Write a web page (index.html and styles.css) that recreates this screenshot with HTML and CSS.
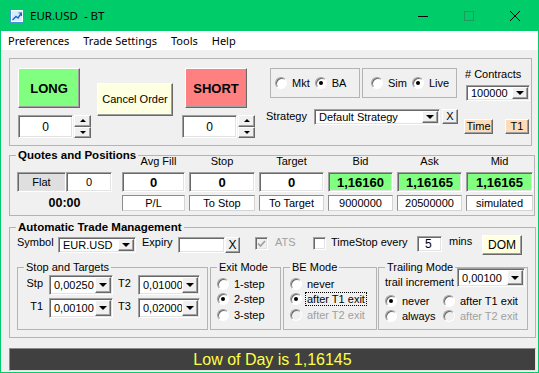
FILE: index.html
```html
<!DOCTYPE html>
<html>
<head>
<meta charset="UTF-8">
<title>EUR.USD - BT</title>
<link rel="stylesheet" href="styles.css">
</head>
<body>
<div id="janela">
    <div class="titulo">
        <svg class="icone" width="14" height="14" viewBox="0 0 14 14">
            <rect x="0.5" y="0.5" width="13" height="13" fill="#ffffff" stroke="#4a90d9"/>
            <rect x="2" y="2" width="10" height="10" fill="#d6ebfb"/>
            <polyline points="2.5,11 6,7.5 8,9 11.5,4" fill="none" stroke="#1d63c2" stroke-width="1.4"/>
            <polyline points="8.5,4 11.5,4 11.5,7" fill="none" stroke="#1d63c2" stroke-width="1.2"/>
        </svg>
        <span class="nome">EUR.USD&nbsp; - BT</span>
        <div class="controles">
            <span><svg width="10" height="10"><line x1="0" y1="5.5" x2="10" y2="5.5" stroke="#000"/></svg></span>
            <span><svg width="10" height="10"><rect x="0.5" y="0.5" width="9" height="9" fill="none" stroke="#1f9a5c"/></svg></span>
            <span><svg width="10" height="10"><path d="M0 0 L10 10 M10 0 L0 10" stroke="#000" stroke-width="1"/></svg></span>
        </div>
    </div>

    <div class="menu">
        <span>Preferences</span>
        <span>Trade Settings</span>
        <span>Tools</span>
        <span>Help</span>
    </div>

    <div class="cliente">
        <!-- ordens -->
        <div class="topo">
            <div class="col-ordem">
                <div class="botao elevado long">LONG</div>
                <div class="spin">
                    <div class="campo afundado">0</div>
                    <div class="setas">
                        <span class="elevado"><i class="cima"></i></span>
                        <span class="elevado"><i class="baixo"></i></span>
                    </div>
                </div>
            </div>
            <div class="botao elevado cancelar">Cancel Order</div>
            <div class="col-ordem curta">
                <div class="botao elevado short">SHORT</div>
                <div class="spin">
                    <div class="campo afundado">0</div>
                    <div class="setas">
                        <span class="elevado"><i class="cima"></i></span>
                        <span class="elevado"><i class="baixo"></i></span>
                    </div>
                </div>
            </div>
            <div class="direita">
                <div class="bloco">
                    <div class="modos">
                        <div class="moldura mkt">
                            <label class="opcao"><span class="radio"></span>Mkt</label>
                            <label class="opcao"><span class="radio marcado"></span>BA</label>
                        </div>
                        <div class="moldura sim">
                            <label class="opcao"><span class="radio"></span>Sim</label>
                            <label class="opcao"><span class="radio marcado"></span>Live</label>
                        </div>
                    </div>
                    <div class="estrategia">
                        <span class="rotulo rot-estrategia">Strategy</span>
                        <div class="combo afundado cb-estrategia">
                            <span class="valor">Default Strategy</span>
                            <span class="seta elevado"><i></i></span>
                        </div>
                        <div class="botao elevado limpar">X</div>
                    </div>
                </div>
                <div class="contratos">
                    <span class="rotulo"># Contracts</span>
                    <div class="combo afundado cb-contratos">
                        <span class="valor">100000</span>
                        <span class="seta elevado"><i></i></span>
                    </div>
                    <div class="botoes-t">
                        <div class="botao elevado peq">Time</div>
                        <div class="botao elevado peq t1">T1</div>
                    </div>
                </div>
            </div>
        </div>

        <!-- cotacoes -->
        <fieldset class="grupo cotas">
            <legend>Quotes and Positions</legend>
            <div class="quadro">
                <div class="posicao">
                    <div class="linha-pos">
                        <span class="cel afundado flat">Flat</span>
                        <span class="cel afundado qtd">0</span>
                    </div>
                    <div class="relogio">00:00</div>
                </div>
                <div class="tabela">
                    <div class="linha cabecs">
                        <span class="fill">Avg Fill</span>
                        <span>Stop</span>
                        <span>Target</span>
                        <span>Bid</span>
                        <span>Ask</span>
                        <span>Mid</span>
                    </div>
                    <div class="linha valores">
                        <span class="cel afundado">0</span>
                        <span class="cel afundado">0</span>
                        <span class="cel afundado">0</span>
                        <span class="cel afundado verde">1,16160</span>
                        <span class="cel afundado verde">1,16165</span>
                        <span class="cel afundado verde">1,16165</span>
                    </div>
                    <div class="linha subs">
                        <span class="cel">P/L</span>
                        <span class="cel">To Stop</span>
                        <span class="cel">To Target</span>
                        <span class="cel">9000000</span>
                        <span class="cel">20500000</span>
                        <span class="cel">simulated</span>
                    </div>
                </div>
            </div>
        </fieldset>

        <!-- gerenciamento -->
        <fieldset class="grupo atm">
            <legend>Automatic Trade Management</legend>
            <div class="linha-atm">
                <span class="rotulo rot-simbolo">Symbol</span>
                <div class="combo afundado cb-simbolo">
                    <span class="valor">EUR.USD</span>
                    <span class="seta elevado"><i></i></span>
                </div>
                <span class="rotulo rot-expiry">Expiry</span>
                <div class="caixa-texto afundado expiracao"></div>
                <div class="botao elevado xs">X</div>
                <span class="check desab"><svg width="9" height="9" viewBox="0 0 9 9"><polyline points="1,4.5 3.5,7 8,2" fill="none" stroke="#a0a0a0" stroke-width="1.7"/></svg></span>
                <span class="rotulo ats">ATS</span>
                <span class="check"></span>
                <span class="rotulo rot-timestop">TimeStop every</span>
                <div class="caixa-texto afundado minutos">5</div>
                <span class="rotulo rot-mins">mins</span>
                <div class="botao elevado dom">DOM</div>
            </div>

            <div class="caixas">
                <fieldset class="sub st">
                    <legend>Stop and Targets</legend>
                    <div class="grade-st">
                        <span class="rot-st dir">Stp</span>
                        <div class="combo afundado">
                            <span class="valor">0,00250</span>
                            <span class="seta elevado"><i></i></span>
                        </div>
                        <span class="rot-st">T2</span>
                        <div class="combo afundado">
                            <span class="valor">0,01000</span>
                            <span class="seta elevado"><i></i></span>
                        </div>
                        <span class="rot-st dir">T1</span>
                        <div class="combo afundado">
                            <span class="valor">0,00100</span>
                            <span class="seta elevado"><i></i></span>
                        </div>
                        <span class="rot-st">T3</span>
                        <div class="combo afundado">
                            <span class="valor">0,02000</span>
                            <span class="seta elevado"><i></i></span>
                        </div>
                    </div>
                </fieldset>
                <fieldset class="sub saida">
                    <legend>Exit Mode</legend>
                    <div class="lista">
                        <label class="opcao"><span class="radio"></span>1-step</label>
                        <label class="opcao"><span class="radio marcado"></span>2-step</label>
                        <label class="opcao"><span class="radio"></span>3-step</label>
                    </div>
                </fieldset>
                <fieldset class="sub be">
                    <legend>BE Mode</legend>
                    <div class="lista">
                        <label class="opcao"><span class="radio"></span>never</label>
                        <label class="opcao"><span class="radio marcado"></span><span class="foco">after T1 exit</span></label>
                        <label class="opcao desab"><span class="radio"></span>after T2 exit</label>
                    </div>
                </fieldset>
                <fieldset class="sub trail">
                    <legend>Trailing Mode</legend>
                    <div class="trail-topo">
                        <span class="rotulo rot-trail">trail increment</span>
                        <div class="combo afundado cb-trail">
                            <span class="valor">0,00100</span>
                            <span class="seta elevado"><i></i></span>
                        </div>
                    </div>
                    <div class="trail-radios">
                        <label class="opcao"><span class="radio marcado"></span>never</label>
                        <label class="opcao"><span class="radio"></span>after T1 exit</label>
                        <label class="opcao"><span class="radio"></span>always</label>
                        <label class="opcao desab"><span class="radio"></span>after T2 exit</label>
                    </div>
                </fieldset>
            </div>
        </fieldset>

        <div class="status">Low of Day is 1,16145</div>
    </div>
</div>
</body>
</html>
```

FILE: styles.css
```css
* {
    box-sizing: border-box;
}

body {
    margin: 0;
    font-family: "Liberation Sans", Arial, sans-serif;
    font-size: 11px;
    color: #000;
}

#janela {
    width: 539px;
    height: 373px;
    background: #00cc6a;
    padding: 0 1px 1px;
    display: flex;
    flex-direction: column;
}

/* barra de titulo */
.titulo {
    height: 31px;
    flex: none;
    display: flex;
    align-items: center;
    padding-left: 9px;
    font-family: "Noto Sans", sans-serif;
    font-size: 11.5px;
}

.nome {
    margin-left: 6px;
}

.controles {
    margin-left: auto;
    display: flex;
    height: 31px;
}

.controles span {
    width: 46px;
    display: flex;
    align-items: center;
    justify-content: center;
}

.menu {
    height: 19px;
    flex: none;
    background: #fff;
    display: flex;
    font-family: "Noto Sans", sans-serif;
    font-size: 11px;
}

.menu span {
    padding: 0 7px;
    line-height: 19px;
}

.cliente {
    flex: 1;
    background: #f0f0f0;
    padding: 8px 0 0 8px;
    display: flex;
    flex-direction: column;
    align-items: flex-start;
}

/* bordas 3d */
.elevado {
    border: 1px solid;
    border-color: #fff #696969 #696969 #fff;
    box-shadow: inset -1px -1px 0 #a0a0a0;
}

.afundado {
    border: 1px solid;
    border-color: #a0a0a0 #fff #fff #a0a0a0;
    box-shadow: inset 1px 1px 0 #696969, inset -1px -1px 0 #e3e3e3;
}

.botao {
    display: flex;
    align-items: center;
    justify-content: center;
    background: #f0f0f0;
    line-height: 1;
    overflow: hidden;
}

.rotulo {
    line-height: 13px;
    white-space: nowrap;
}

/* combos */
.combo {
    display: flex;
    background: #fff;
    padding: 1px;
}

.combo .valor {
    flex: 1;
    padding-left: 3px;
    display: flex;
    align-items: center;
    white-space: nowrap;
    overflow: hidden;
}

.seta {
    width: 16px;
    flex: none;
    display: flex;
    align-items: center;
    justify-content: center;
    background: #f0f0f0;
}

.seta i {
    width: 0;
    height: 0;
    border-left: 4px solid transparent;
    border-right: 4px solid transparent;
    border-top: 4px solid #000;
}

/* radios e checks */
.opcao {
    display: flex;
    align-items: center;
    gap: 5px;
    white-space: nowrap;
}

.radio {
    position: relative;
    width: 12px;
    height: 12px;
    flex: none;
    border-radius: 50%;
    background: #fff;
    border: 1px solid;
    border-color: #a0a0a0 #fff #fff #a0a0a0;
    box-shadow: inset 1px 1px 0 #696969;
}

.radio.marcado::after {
    content: "";
    position: absolute;
    left: 3px;
    top: 3px;
    width: 4px;
    height: 4px;
    border-radius: 50%;
    background: #000;
}

.opcao.desab {
    color: #a0a0a0;
}

.opcao.desab .radio {
    background: #f0f0f0;
}

.check {
    width: 13px;
    height: 13px;
    flex: none;
    background: #fff;
    display: flex;
    align-items: center;
    justify-content: center;
    border: 1px solid;
    border-color: #a0a0a0 #fff #fff #a0a0a0;
    box-shadow: inset 1px 1px 0 #696969, inset -1px -1px 0 #e3e3e3;
    margin-top: 2px;
}

.check.desab {
    background: #f0f0f0;
}

/* grupo de ordens */
.topo {
    width: 523px;
    height: 88px;
    flex: none;
    border: 1px solid #b4b4b4;
    display: flex;
    align-items: flex-start;
    padding: 9px 0 0 8px;
}

.col-ordem {
    width: 73px;
    display: flex;
    flex-direction: column;
    gap: 7px;
}

.long,
.short {
    width: 62px;
    height: 40px;
    font-weight: bold;
    font-size: 13px;
}

.long {
    background: #80ff80;
}

.short {
    background: #ff8080;
    margin-left: 3px;
}

.spin {
    display: flex;
    height: 23px;
    gap: 1px;
}

.spin .campo {
    width: 55px;
    background: #fff;
    display: flex;
    align-items: center;
    justify-content: center;
    font-size: 12px;
}

.setas {
    width: 17px;
    display: flex;
    flex-direction: column;
}

.setas span {
    flex: 1;
    display: flex;
    align-items: center;
    justify-content: center;
    background: #f0f0f0;
}

.cima,
.baixo {
    width: 0;
    height: 0;
    border-left: 3px solid transparent;
    border-right: 3px solid transparent;
}

.cima {
    border-bottom: 3px solid #000;
}

.baixo {
    border-top: 3px solid #000;
}

.cancelar {
    width: 76px;
    height: 33px;
    margin: 15px 0 0 6px;
    background: #ffffe1;
}

.curta {
    margin-left: 9px;
}

.direita {
    margin-left: 10px;
    display: flex;
}

.bloco {
    width: 193px;
    display: flex;
    flex-direction: column;
}

.modos {
    display: flex;
    gap: 2px;
    margin-left: 5px;
    height: 30px;
}

.moldura {
    border: 1px solid #b4b4b4;
    display: flex;
    align-items: center;
    gap: 5px;
}

.mkt {
    width: 90px;
    padding-left: 4px;
}

.sim {
    width: 95px;
    padding-left: 8px;
}

.estrategia {
    display: flex;
    align-items: flex-start;
    margin-top: 11px;
}

.rot-estrategia {
    width: 48px;
    margin: 1px 0 0 1px;
}

.cb-estrategia {
    width: 126px;
    height: 16px;
}

.limpar {
    width: 16px;
    height: 15px;
    margin-left: 2px;
}

.contratos {
    margin-left: 7px;
    width: 66px;
    display: flex;
    flex-direction: column;
    align-items: flex-start;
}

.cb-contratos {
    width: 64px;
    height: 16px;
    margin: 4px 0 0 1px;
}

.botoes-t {
    display: flex;
    margin: 18px 0 0 -1px;
}

.peq {
    width: 29px;
    height: 15px;
    background: #ffdcb9;
}

.t1 {
    width: 24px;
    margin-left: 12px;
}

/* caixas de grupo */
fieldset {
    margin: 0;
    padding: 0;
    min-width: 0;
    border: 1px solid #b4b4b4;
}

.grupo > legend {
    font-weight: bold;
    font-size: 11.5px;
    line-height: 14px;
    padding: 0 2px;
    margin-left: 6px;
}

.cotas {
    width: 526px;
    margin-top: 2px;
    flex: none;
}

.quadro {
    display: flex;
    padding: 0 0 4px 7px;
    margin-top: -7px;
}

.posicao {
    width: 95px;
    margin-top: 17px;
}

.linha-pos {
    display: flex;
    height: 20px;
}

.cel {
    display: flex;
    align-items: center;
    justify-content: center;
    white-space: nowrap;
}

.flat {
    width: 49px;
    background: #dfdfdf;
}

.qtd {
    width: 46px;
    background: #fff;
}

.relogio {
    margin-top: 3px;
    height: 16px;
    line-height: 16px;
    text-align: center;
    font-weight: bold;
    font-size: 12.5px;
}

.tabela {
    margin-left: 10px;
}

.linha {
    display: grid;
    grid-template-columns: 63px 66px 65px 65px 65px 67px;
    column-gap: 4px;
}

.cabecs {
    height: 12px;
    line-height: 12px;
    text-align: center;
}

.cabecs .fill {
    padding-left: 10px;
}

.valores {
    margin-top: 5px;
    height: 20px;
}

.valores .cel {
    background: #fff;
    font-weight: bold;
    font-size: 13px;
}

.valores .verde {
    background: #80ff80;
}

.subs {
    margin-top: 3px;
    height: 16px;
}

.subs .cel {
    background: #fff;
    border: 1px solid;
    border-color: #8c8c8c #d4d4d4 #d4d4d4 #8c8c8c;
}

.atm {
    width: 527px;
    margin-top: 4px;
    padding-bottom: 7px;
    flex: none;
}

.linha-atm {
    display: flex;
    align-items: flex-start;
    margin-top: 1px;
    padding-left: 7px;
    height: 20px;
}

.linha-atm .rotulo {
    margin-top: 1px;
}

.rot-simbolo {
    width: 41px;
}

.cb-simbolo {
    width: 78px;
    height: 16px;
    margin-top: 2px;
}

.rot-expiry {
    width: 36px;
    margin-left: 6px;
}

.caixa-texto {
    background: #fff;
    display: flex;
    align-items: center;
    padding-left: 7px;
    font-size: 12px;
}

.expiracao {
    width: 47px;
    height: 16px;
    margin-top: 2px;
}

.xs {
    width: 15px;
    height: 16px;
    margin-top: 2px;
    font-size: 12px;
}

.linha-atm .check.desab {
    margin-left: 15px;
}

.ats {
    width: 38px;
    margin-left: 7px;
    color: #a0a0a0;
}

.rot-timestop {
    width: 86px;
    margin-left: 5px;
}

.minutos {
    width: 25px;
    height: 16px;
    margin-top: 1px;
}

.linha-atm .rot-mins {
    width: 33px;
    margin: 0 0 0 7px;
}

.dom {
    width: 40px;
    height: 20px;
    background: #ffffe1;
    font-size: 12px;
}

.caixas {
    display: flex;
    margin-top: 6px;
    padding-left: 7px;
    height: 69px;
}

.sub > legend {
    font-size: 11px;
    line-height: 12px;
    padding: 0 2px;
    margin-left: 6px;
}

.st {
    width: 191px;
}

.saida {
    width: 71px;
    margin-left: 2px;
}

.be {
    width: 94px;
    margin-left: 2px;
}

.trail {
    width: 150px;
    margin-left: 1px;
}

.grade-st {
    display: grid;
    grid-template-columns: 31px 64px 25px 62px;
    grid-template-rows: 20px 20px;
    row-gap: 3px;
    padding-top: 2px;
}

.rot-st {
    line-height: 13px;
    margin-top: 2px;
    padding-left: 5px;
}

.rot-st.dir {
    text-align: right;
    padding: 0 6px 0 0;
}

.lista {
    padding: 3px 0 0 6px;
}

.lista .opcao {
    height: 15.5px;
}

.foco {
    outline: 1px dotted #000;
    padding: 0 1px;
    margin-left: -1px;
}

.trail-topo {
    display: flex;
    align-items: flex-start;
    margin-top: -5px;
    padding-left: 6px;
}

.rot-trail {
    width: 72px;
    margin-top: 8px;
}

.cb-trail {
    width: 68px;
    height: 19px;
}

.trail-radios {
    display: grid;
    grid-template-columns: 58px auto;
    margin-top: 4px;
    padding-left: 6px;
}

.trail-radios .opcao {
    height: 15.5px;
}

.status {
    width: 527px;
    height: 23px;
    margin-top: 10px;
    flex: none;
    background: #404040;
    color: #ffff40;
    font-size: 16px;
    display: flex;
    align-items: center;
    justify-content: center;
    border: 1px solid;
    border-color: #8c8c8c #e3e3e3 #e3e3e3 #8c8c8c;
}
```
